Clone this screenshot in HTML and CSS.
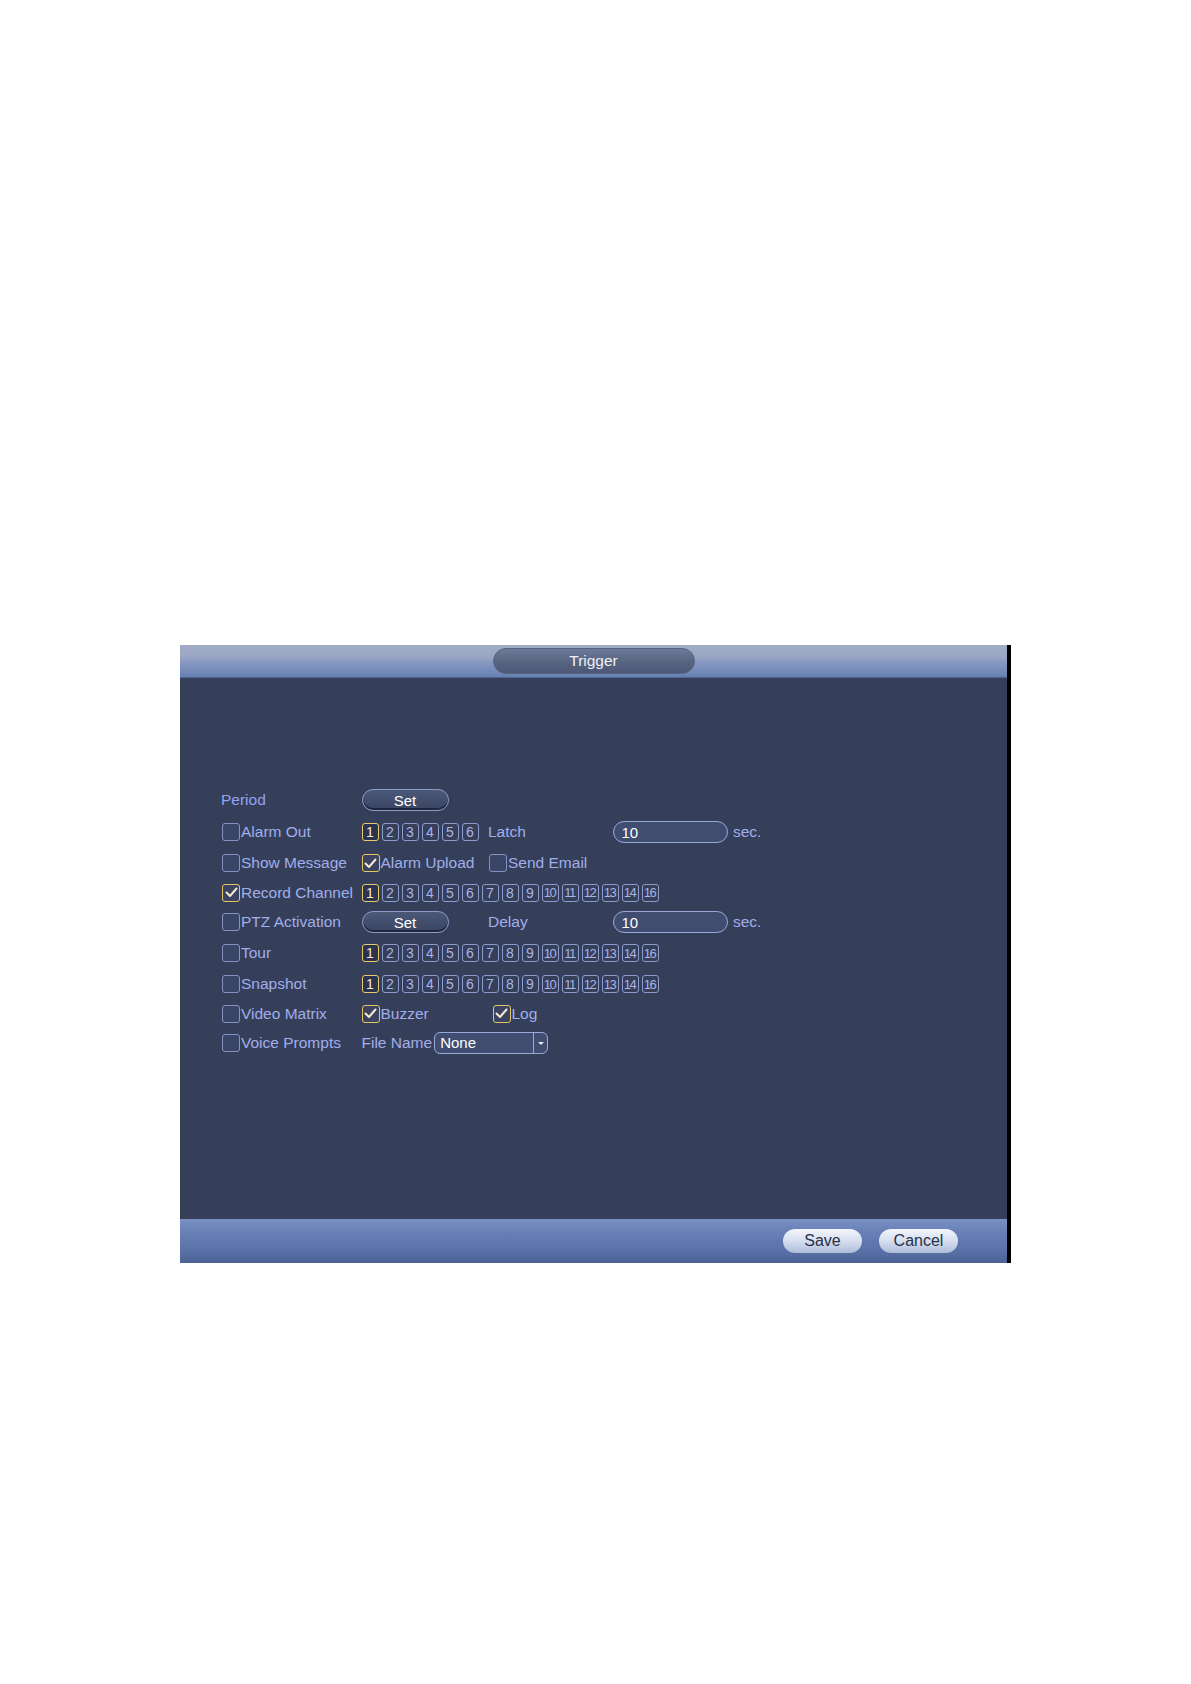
FILE: index.html
```html
<!DOCTYPE html>
<html>
<head>
<meta charset="utf-8">
<link rel="stylesheet" href="styles.css">
</head>
<body>
<div class="page">
  <div class="panel">
    <div class="head"><div class="title">Trigger</div></div>
    <div class="body">
      <div class="row r32">
        <div class="c1"><span class="lbl period">Period</span></div>
        <div class="c2"><span class="btn">Set</span></div>
      </div>
      <div class="row r32">
        <div class="c1"><span class="cb"></span><span class="lbl">Alarm Out</span></div>
        <div class="c2 nums">
          <span class="n cur">1</span><span class="n">2</span><span class="n">3</span><span class="n">4</span><span class="n">5</span><span class="n">6</span>
        </div>
        <div class="c3"><span class="lbl">Latch</span></div>
        <span class="inp">10</span><span class="lbl sec">sec.</span>
      </div>
      <div class="row r30">
        <div class="c1"><span class="cb"></span><span class="lbl">Show Message</span></div>
        <div class="c2 wide"><span class="cb on"><svg viewBox="0 0 17 17" width="17" height="17"><path d="M3.5 8.5 L7 12 L13.5 4.5" fill="none" stroke="#f2ead0" stroke-width="2" stroke-linecap="round" stroke-linejoin="round"/></svg></span><span class="lbl">Alarm Upload</span></div>
        <span class="cb"></span><span class="lbl">Send Email</span>
      </div>
      <div class="row r29">
        <div class="c1"><span class="cb on"><svg viewBox="0 0 17 17" width="17" height="17"><path d="M3.5 8.5 L7 12 L13.5 4.5" fill="none" stroke="#f2ead0" stroke-width="2" stroke-linecap="round" stroke-linejoin="round"/></svg></span><span class="lbl">Record Channel</span></div>
        <div class="nums">
          <span class="n cur">1</span><span class="n">2</span><span class="n">3</span><span class="n">4</span><span class="n">5</span><span class="n">6</span><span class="n">7</span><span class="n">8</span><span class="n">9</span><span class="n dd">10</span><span class="n dd">11</span><span class="n dd">12</span><span class="n dd">13</span><span class="n dd">14</span><span class="n dd">16</span>
        </div>
      </div>
      <div class="row r30">
        <div class="c1"><span class="cb"></span><span class="lbl">PTZ Activation</span></div>
        <div class="c2"><span class="btn">Set</span></div>
        <div class="c3"><span class="lbl">Delay</span></div>
        <span class="inp">10</span><span class="lbl sec">sec.</span>
      </div>
      <div class="row r32">
        <div class="c1"><span class="cb"></span><span class="lbl">Tour</span></div>
        <div class="nums">
          <span class="n cur">1</span><span class="n">2</span><span class="n">3</span><span class="n">4</span><span class="n">5</span><span class="n">6</span><span class="n">7</span><span class="n">8</span><span class="n">9</span><span class="n dd">10</span><span class="n dd">11</span><span class="n dd">12</span><span class="n dd">13</span><span class="n dd">14</span><span class="n dd">16</span>
        </div>
      </div>
      <div class="row r30">
        <div class="c1"><span class="cb"></span><span class="lbl">Snapshot</span></div>
        <div class="nums">
          <span class="n cur">1</span><span class="n">2</span><span class="n">3</span><span class="n">4</span><span class="n">5</span><span class="n">6</span><span class="n">7</span><span class="n">8</span><span class="n">9</span><span class="n dd">10</span><span class="n dd">11</span><span class="n dd">12</span><span class="n dd">13</span><span class="n dd">14</span><span class="n dd">16</span>
        </div>
      </div>
      <div class="row r29">
        <div class="c1"><span class="cb"></span><span class="lbl">Video Matrix</span></div>
        <div class="c2 wider"><span class="cb on"><svg viewBox="0 0 17 17" width="17" height="17"><path d="M3.5 8.5 L7 12 L13.5 4.5" fill="none" stroke="#f2ead0" stroke-width="2" stroke-linecap="round" stroke-linejoin="round"/></svg></span><span class="lbl">Buzzer</span></div>
        <span class="cb on"><svg viewBox="0 0 17 17" width="17" height="17"><path d="M3.5 8.5 L7 12 L13.5 4.5" fill="none" stroke="#f2ead0" stroke-width="2" stroke-linecap="round" stroke-linejoin="round"/></svg></span><span class="lbl">Log</span>
      </div>
      <div class="row r29">
        <div class="c1"><span class="cb"></span><span class="lbl">Voice Prompts</span></div>
        <span class="lbl">File Name</span>
        <div class="dropdown"><span class="v">None</span><span class="arr"><svg viewBox="0 0 10 10" width="10" height="10"><path d="M2 4 L8 4 L5 7 Z" fill="#e8ecf8"/></svg></span></div>
      </div>
    </div>
    <div class="foot"><span class="fbtn">Save</span><span class="fbtn">Cancel</span></div>
  </div>
</div>
</body>
</html>
```

FILE: styles.css
```css
html, body {
  margin: 0;
  padding: 0;
  background: #ffffff;
}

.page {
  padding: 645px 0 0 180px;
}

.panel {
  width: 827px;
  border-right: 4px solid #000;
  font-family: "Liberation Sans", Arial, sans-serif;
}

.head {
  height: 33px;
  box-sizing: border-box;
  padding-top: 3px;
  display: flex;
  justify-content: center;
  align-items: flex-start;
  background: linear-gradient(#a2acc6 0%, #9aa6c3 35%, #8596c0 55%, #6f88b8 85%, #6682b6 95%, #485882 100%);
}

.title {
  width: 202px;
  height: 26px;
  border-radius: 13px;
  box-sizing: border-box;
  border: 1px solid #56637f;
  background: linear-gradient(#6e7b98, #56637f 60%, #4c5876);
  color: #eef0f8;
  font-size: 15.5px;
  display: flex;
  align-items: center;
  justify-content: center;
}

.body {
  height: 541px;
  box-sizing: border-box;
  padding: 106px 0 0 42px;
  background: #353f5a;
}

.row {
  display: flex;
  align-items: center;
}

.r32 { height: 32px; }
.r30 { height: 30px; }
.r29 { height: 29px; }

.c1 {
  width: 139.5px;
  display: flex;
  align-items: center;
  flex: none;
}

.c2 {
  width: 126.5px;
  display: flex;
  align-items: center;
  flex: none;
}

.c2.wide { width: 127.5px; }
.c2.wider { width: 131px; }

.c3 {
  width: 124.5px;
  flex: none;
}

.lbl {
  color: #a2aeea;
  font-size: 15.5px;
  white-space: nowrap;
}

.period {
  color: #93a3f0;
  margin-left: -1px;
}

.cb {
  width: 18px;
  height: 18px;
  box-sizing: border-box;
  border: 1.5px solid #8592c2;
  border-radius: 3px;
  background: #3a4466;
  margin-right: 1px;
  flex: none;
  display: flex;
  align-items: center;
  justify-content: center;
  overflow: hidden;
}

.cb.on {
  border-color: #e2c862;
  background: #3c4262;
}

.cb svg {
  display: block;
  flex: none;
}

.nums {
  display: flex;
  gap: 3px;
}

.n {
  width: 17px;
  height: 18px;
  box-sizing: border-box;
  border: 1.5px solid #8d9bcb;
  border-radius: 3px;
  color: #a8b4e4;
  font-size: 14px;
  line-height: 1;
  display: flex;
  align-items: center;
  justify-content: center;
  flex: none;
  overflow: hidden;
}

.n.cur {
  border-color: #e6cc66;
  background: #2c3350;
  color: #f4eccc;
}

.n.dd {
  font-size: 13px;
  letter-spacing: -1.5px;
  padding-right: 1px;
}

.btn {
  width: 87px;
  height: 22px;
  box-sizing: border-box;
  border: 1.5px solid #8c9ac8;
  border-radius: 11px;
  background: linear-gradient(#4c5878, #3a4562);
  box-shadow: inset 0 -2px 0 #1f2740;
  color: #ffffff;
  font-size: 15px;
  display: flex;
  align-items: center;
  justify-content: center;
}

.inp {
  width: 115px;
  height: 22px;
  box-sizing: border-box;
  border: 1.5px solid #9aa8d8;
  border-radius: 11px;
  background: #414d70;
  color: #ffffff;
  font-size: 15px;
  padding-left: 8px;
  display: flex;
  align-items: center;
  flex: none;
}

.sec {
  margin-left: 5.5px;
}

.dropdown {
  width: 114px;
  height: 22px;
  margin-left: 2px;
  box-sizing: border-box;
  border: 1.5px solid #9aa8d8;
  border-radius: 6px;
  background: #414d70;
  display: flex;
  align-items: stretch;
  flex: none;
}

.dropdown .v {
  flex: 1;
  color: #ffffff;
  font-size: 15px;
  padding-left: 5px;
  display: flex;
  align-items: center;
}

.dropdown .arr {
  width: 13px;
  border-left: 1px solid #9aa8d8;
  display: flex;
  align-items: center;
  justify-content: center;
}

.foot {
  height: 44px;
  box-sizing: border-box;
  padding: 10px 49px 0 0;
  display: flex;
  justify-content: flex-end;
  align-items: flex-start;
  gap: 17px;
  background: linear-gradient(#7890c2 0%, #6880b6 30%, #5a72a8 70%, #4c6296 100%);
}

.fbtn {
  width: 79px;
  height: 24px;
  border-radius: 12px;
  background: linear-gradient(#f2f5fb 0%, #d6deee 50%, #aebcdb 100%);
  color: #26304a;
  font-size: 16px;
  display: flex;
  align-items: center;
  justify-content: center;
}
```
